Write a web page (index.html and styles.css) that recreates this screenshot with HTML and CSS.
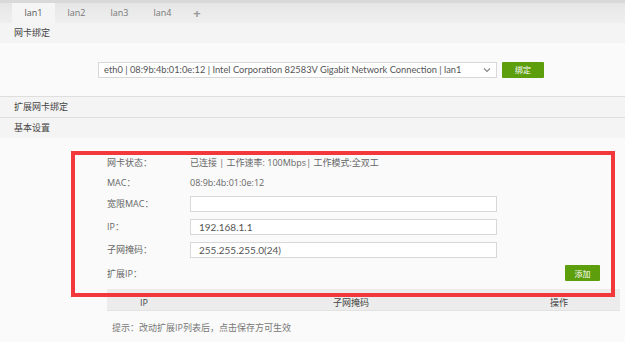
FILE: index.html
```html
<!DOCTYPE html>
<html lang="zh-CN">
<head>
  <meta charset="UTF-8">
  <title>网卡设置</title>
  <link rel="stylesheet" href="styles.css">
</head>
<body>
  <div class="tabs">
    <span class="tab active">lan1</span>
    <span class="tab">lan2</span>
    <span class="tab">lan3</span>
    <span class="tab">lan4</span>
    <span class="tab add">+</span>
  </div>

  <div class="section-title">网卡绑定</div>
  <div class="bind-row">
    <div class="select">
      <span>eth0 | 08:9b:4b:01:0e:12 | Intel Corporation 82583V Gigabit Network Connection | lan1</span>
      <svg class="caret" width="8" height="6" viewBox="0 0 8 6"><path d="M1 1.5 L4 4.5 L7 1.5" fill="none" stroke="#888" stroke-width="1.2"/></svg>
    </div>
    <button class="btn">绑定</button>
  </div>

  <div class="section-title bordered">扩展网卡绑定</div>
  <div class="section-title bordered">基本设置</div>

  <div class="form">
    <div class="row text-row"><span class="label">网卡状态：</span><span class="value">已连接 | 工作速率: 100Mbps| 工作模式:全双工</span></div>
    <div class="row text-row"><span class="label">MAC：</span><span class="value">08:9b:4b:01:0e:12</span></div>
    <div class="row"><span class="label">宽限MAC：</span><input class="input" type="text" value=""></div>
    <div class="row"><span class="label">IP：</span><input class="input" type="text" value="192.168.1.1"></div>
    <div class="row"><span class="label">子网掩码：</span><input class="input" type="text" value="255.255.255.0(24)"></div>
    <div class="row ext-row"><span class="label">扩展IP：</span><button class="btn small">添加</button></div>

    <div class="table-head">
      <span class="col-ip">IP</span>
      <span class="col-mask">子网掩码</span>
      <span class="col-op">操作</span>
    </div>
    <div class="hint">提示：改动扩展IP列表后，点击保存方可生效</div>
  </div>

  <div class="highlight"></div>
</body>
</html>
```

FILE: styles.css
```css
body {
  margin: 0;
  background: #fafafa;
  font-family: "Open Sans", "Noto Sans CJK SC", sans-serif;
  font-size: 9px;
  color: #555;
  overflow: hidden;
}

.tabs {
  height: 20px;
  border-top: 3px solid #d9d9d9;
  background: linear-gradient(#e6e6e6, #efefef);
  padding-left: 12px;
  display: flex;
}

.tab {
  width: 43px;
  line-height: 20px;
  text-align: center;
  color: #777;
  font-size: 9px;
}

.tab.active {
  background: #f5f5f5;
  color: #555;
}

.tab.add {
  width: 26px;
  font-size: 13px;
  font-weight: bold;
  color: #999;
}

.section-title {
  height: 20px;
  line-height: 20px;
  background: #f4f4f4;
  padding-left: 14px;
  color: #444;
  font-size: 9px;
}

.section-title.bordered {
  border-top: 1px solid #dedede;
}

.bind-row {
  height: 53px;
  display: flex;
  align-items: center;
  padding-left: 98px;
}

.select {
  box-sizing: border-box;
  width: 399px;
  height: 16px;
  border: 1px solid #d8d8d8;
  background: #fff;
  display: flex;
  align-items: center;
  justify-content: space-between;
  padding-left: 5px;
  padding-right: 5px;
  font-family: "Lato", "Open Sans", sans-serif;
  font-size: 9.3px;
  white-space: nowrap;
  color: #555;
}

.btn {
  margin-left: 5px;
  width: 42px;
  height: 16px;
  border: none;
  border-radius: 1px;
  background: #5c9e0b;
  color: #fff;
  font-family: "Noto Sans CJK SC", sans-serif;
  font-size: 8px;
  padding: 0;
}

.btn.small {
  width: 35px;
  margin-left: auto;
  margin-right: 25px;
}

.form {
  padding: 14px 0 0 107px;
}

.row {
  display: flex;
  align-items: center;
  height: 23px;
}

.row.text-row {
  height: 20px;
}

.label {
  width: 83px;
  color: #666;
}

.value {
  color: #666;
}

.input {
  box-sizing: border-box;
  width: 307px;
  height: 16px;
  border: 1px solid #d8d8d8;
  background: #fff;
  font-family: "Lato", "Open Sans", sans-serif;
  font-size: 10px;
  color: #555;
  padding: 0 0 0 8px;
}

.row.ext-row {
  height: 24px;
}

.table-head {
  box-sizing: border-box;
  margin-top: 4px;
  width: 513px;
  height: 22px;
  padding-top: 5px;
  background: #ececec;
  border-bottom: 1px solid #e2e2e2;
  display: flex;
  align-items: center;
  color: #444;
}

.col-ip {
  width: 193px;
  padding-left: 33px;
}

.col-mask {
  width: 217px;
}

.col-op {
  width: 40px;
}

.hint {
  margin-top: 10px;
  padding-left: 5px;
  color: #777;
}

.highlight {
  position: absolute;
  left: 71px;
  top: 151px;
  width: 536px;
  height: 138px;
  border: 4px solid #f2383a;
}
```
